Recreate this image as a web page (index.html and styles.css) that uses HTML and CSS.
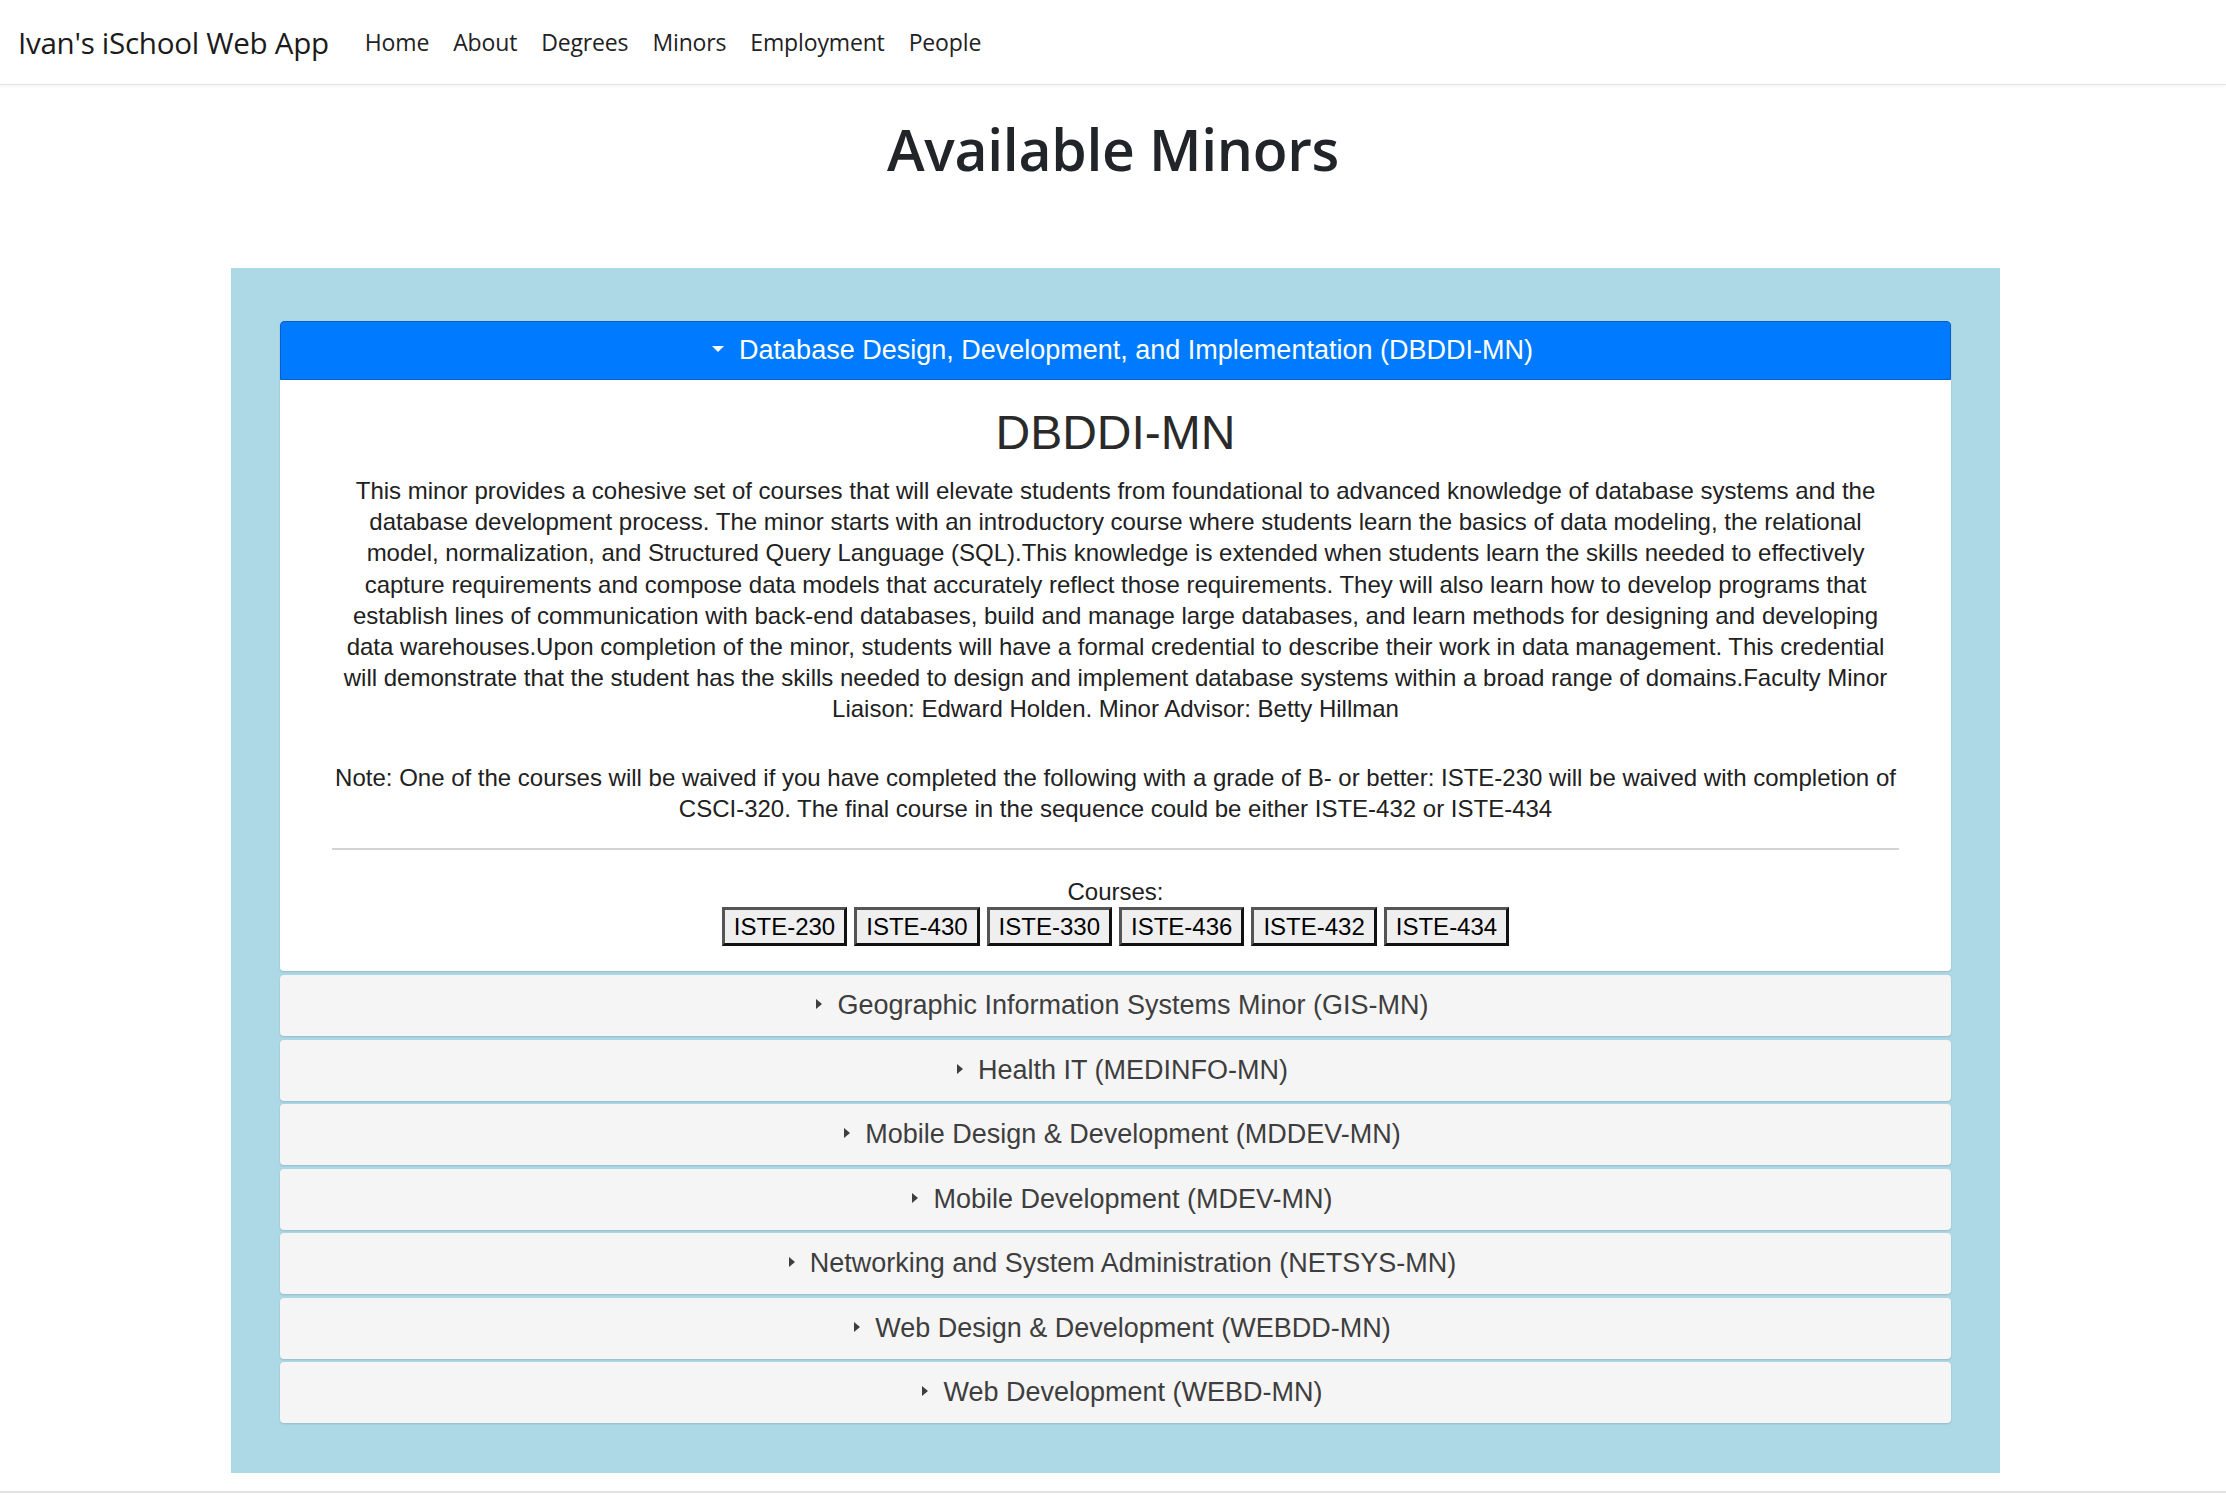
FILE: index.html
```html
<!DOCTYPE html>
<html lang="en">
<head>
<meta charset="utf-8">
<title>Ivan's iSchool Web App</title>
<link rel="stylesheet" href="styles.css">
</head>
<body>
<nav class="navbar">
  <a class="brand" href="#">Ivan's iSchool Web App</a>
  <ul class="nav-links">
    <li><a href="#">Home</a></li>
    <li><a href="#">About</a></li>
    <li><a href="#">Degrees</a></li>
    <li><a href="#">Minors</a></li>
    <li><a href="#">Employment</a></li>
    <li><a href="#">People</a></li>
  </ul>
</nav>
<main>
  <h1 class="page-title">Available Minors</h1>
  <section class="minors">
    <details class="minor" open>
      <summary>Database Design, Development, and Implementation (DBDDI-MN)</summary>
      <div class="minor-body">
        <h2>DBDDI-MN</h2>
        <p class="desc">This minor provides a cohesive set of courses that will elevate students from foundational to advanced knowledge of database systems and the database development process. The minor starts with an introductory course where students learn the basics of data modeling, the relational model, normalization, and Structured Query Language (SQL).This knowledge is extended when students learn the skills needed to effectively capture requirements and compose data models that accurately reflect those requirements. They will also learn how to develop programs that establish lines of communication with back-end databases, build and manage large databases, and learn methods for designing and developing data warehouses.Upon completion of the minor, students will have a formal credential to describe their work in data management. This credential will demonstrate that the student has the skills needed to design and implement database systems within a broad range of domains.Faculty Minor Liaison: Edward Holden. Minor Advisor: Betty Hillman</p>
        <p class="desc note">Note: One of the courses will be waived if you have completed the following with a grade of B- or better: ISTE-230 will be waived with completion of CSCI-320. The final course in the sequence could be either ISTE-432 or ISTE-434</p>
        <hr class="divider">
        <div class="courses-label">Courses:</div>
        <div class="courses">
          <button class="course">ISTE-230</button>
          <button class="course">ISTE-430</button>
          <button class="course">ISTE-330</button>
          <button class="course">ISTE-436</button>
          <button class="course">ISTE-432</button>
          <button class="course">ISTE-434</button>
        </div>
      </div>
    </details>
    <details class="minor"><summary>Geographic Information Systems Minor (GIS-MN)</summary></details>
    <details class="minor"><summary>Health IT (MEDINFO-MN)</summary></details>
    <details class="minor"><summary>Mobile Design &amp; Development (MDDEV-MN)</summary></details>
    <details class="minor"><summary>Mobile Development (MDEV-MN)</summary></details>
    <details class="minor"><summary>Networking and System Administration (NETSYS-MN)</summary></details>
    <details class="minor"><summary>Web Design &amp; Development (WEBDD-MN)</summary></details>
    <details class="minor"><summary>Web Development (WEBD-MN)</summary></details>
  </section>
</main>
<footer class="footer"></footer>
</body>
</html>
```

FILE: styles.css
```css
* { box-sizing: border-box; }

html, body {
  margin: 0;
  padding: 0;
  background: #fff;
}

body {
  font-family: "Liberation Sans", Arial, sans-serif;
  color: #212529;
}

.navbar {
  display: flex;
  align-items: center;
  height: 85px;
  padding: 0 24px 0 18px;
  border-bottom: 1px solid #e2e2e2;
  box-shadow: 0 2px 3px rgba(0, 0, 0, 0.03);
  font-family: "Open Sans", "Noto Sans", sans-serif;
}

.brand {
  font-size: 29.6px;
  color: #1b1b1b;
  text-decoration: none;
  margin-right: 24px;
  letter-spacing: -0.3px;
}

.nav-links {
  display: flex;
  list-style: none;
  margin: 0;
  padding: 0;
}

.nav-links a {
  display: block;
  padding: 0 12px;
  font-size: 23px;
  color: #222;
  text-decoration: none;
  letter-spacing: -0.15px;
}

.page-title {
  font-family: "Open Sans", "Noto Sans", sans-serif;
  font-weight: 600;
  font-size: 57px;
  line-height: 72px;
  text-align: center;
  margin: 28px 0 83px;
  color: #212529;
  letter-spacing: -0.3px;
}

.minors {
  width: 1769px;
  margin-left: 231px;
  background: #add8e6;
  padding: 53px 49px 50px;
}

.minor {
  margin-bottom: 3.5px;
  border-radius: 4px;
  background: #f5f5f5;
  box-shadow: 0 1px 2px rgba(0, 0, 0, 0.14);
}

.minor:last-child { margin-bottom: 0; }

.minor summary {
  display: block;
  list-style: none;
  font-size: 27px;
  line-height: 31px;
  padding: 15px 20px 15px 34px;
  text-align: center;
  color: #3e3e3e;
  cursor: pointer;
}

.minor summary::-webkit-details-marker { display: none; }

.minor summary::before {
  content: "";
  display: inline-block;
  vertical-align: middle;
  margin: 0 15px 5px 0;
  width: 0;
  height: 0;
  border-top: 5px solid transparent;
  border-bottom: 5px solid transparent;
  border-left: 6px solid currentColor;
}

.minor[open] summary::before {
  border-left: 6px solid transparent;
  border-right: 6px solid transparent;
  border-top: 6px solid currentColor;
  border-bottom: 0;
  margin: 0 15px 6px 0;
}

.minor[open] {
  background: #fff;
  margin-bottom: 4px;
}

.minor[open] summary {
  background: #007bff;
  color: #fff;
  border: 1px solid #0a5fd0;
  border-radius: 4px 4px 0 0;
  padding: 13px 20px 13px 34px;
}

.minor-body {
  padding: 24px 52px 25px;
  text-align: center;
  color: #212121;
}

.minor-body h2 {
  font-size: 48px;
  font-weight: 400;
  line-height: 57px;
  margin: 0 0 14px;
  color: #2a2a2a;
}

.desc {
  font-size: 24px;
  line-height: 31.2px;
  margin: 0;
}

.note { margin-top: 37px; }

.divider {
  border: 0;
  border-top: 2px solid #d3d3d3;
  margin: 24px 0 26px;
}

.courses-label {
  font-size: 24px;
  line-height: 31px;
}

.courses {
  display: flex;
  justify-content: center;
  gap: 7px;
}

.course {
  font-family: "Liberation Sans", Arial, sans-serif;
  font-size: 24px;
  line-height: 29px;
  height: 39px;
  padding: 2px 9px;
  background: #efefef;
  color: #000;
  border: 3px solid;
  border-color: #555 #111 #111 #555;
}

.footer {
  margin-top: 18px;
  border-top: 2px solid #e3e3e3;
  height: 12px;
}
```
